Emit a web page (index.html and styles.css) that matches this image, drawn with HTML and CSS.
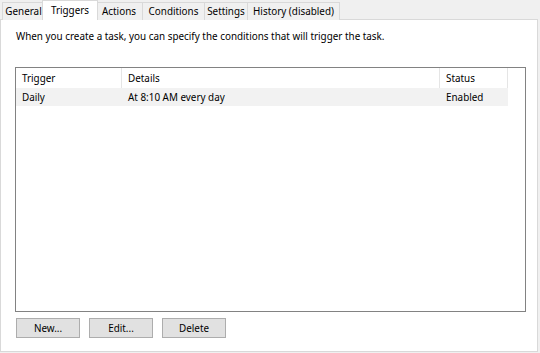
FILE: index.html
```html
<!DOCTYPE html>
<html>
<head>
<meta charset="utf-8">
<link rel="stylesheet" href="styles.css">
</head>
<body>
<div class="dialog">
  <div class="tabs">
    <div class="tab t-general">General</div>
    <div class="tab t-triggers selected">Triggers</div>
    <div class="tab t-actions">Actions</div>
    <div class="tab t-conditions">Conditions</div>
    <div class="tab t-settings">Settings</div>
    <div class="tab t-history">History (disabled)</div>
  </div>
  <div class="page">
    <p class="intro">When you create a task, you can specify the conditions that will trigger the task.</p>
    <div class="listbox">
      <div class="row header">
        <div class="cell c1">Trigger</div>
        <div class="cell c2">Details</div>
        <div class="cell c3">Status</div>
      </div>
      <div class="row item">
        <div class="cell c1">Daily</div>
        <div class="cell c2">At 8:10 AM every day</div>
        <div class="cell c3">Enabled</div>
      </div>
    </div>
    <div class="buttons">
      <button class="btn">New...</button>
      <button class="btn">Edit...</button>
      <button class="btn">Delete</button>
    </div>
  </div>
</div>
</body>
</html>
```
FILE: styles.css
```css
html, body {
  margin: 0;
  padding: 0;
  background: #f0f0f0;
  font-family: "Segoe UI", "Noto Sans", "Open Sans", sans-serif;
  font-size: 9.9px;
  color: #000;
}
.dialog {
  width: 538px;
  height: 353px;
  display: flex;
  flex-direction: column;
}
.tabs {
  display: flex;
  align-items: flex-end;
  height: 20px;
  padding-left: 2px;
  position: relative;
  z-index: 1;
  margin-bottom: -1px;
}
.tab {
  box-sizing: border-box;
  height: 18px;
  line-height: 17px;
  border: 1px solid #d9d9d9;
  border-bottom: none;
  margin-left: -1px;
  background: #f0f0f0;
  white-space: nowrap;
  text-align: center;
}
.t-general { width: 43px; margin-left: 0; }
.t-triggers { width: 56px; }
.t-actions { width: 48px; }
.t-conditions { width: 63px; }
.t-settings { width: 44px; }
.t-history { width: 93px; }
.tab.selected {
  background: #fff;
  height: 20px;
  line-height: 18px;
  margin-left: -3px;
  margin-right: -2px;
  position: relative;
  z-index: 2;
}
.page {
  height: 331px;
  background: #fff;
  border: 1px solid #d9d9d9;
  display: flex;
  flex-direction: column;
  padding: 0 11px 0 14px;
}
.intro {
  margin: 8px 0 0 1px;
  line-height: 16px;
  white-space: nowrap;
}
.listbox {
  margin-top: 23px;
  height: 243px;
  width: 509px;
  border: 1px solid #828282;
  background: #fff;
}
.row {
  display: flex;
  height: 20px;
  line-height: 20px;
}
.row.item {
  height: 18px;
  line-height: 18px;
  width: 492px;
  background: #f2f2f2;
}
.cell {
  padding-left: 6px;
  white-space: nowrap;
  box-sizing: border-box;
}
.c1 { width: 106px; }
.c2 { width: 318px; }
.c3 { width: 68px; }
.header .cell { border-right: 1px solid #e5e5e5; }
.buttons {
  display: flex;
  gap: 9px;
  margin-top: 6px;
  padding-left: 1px;
}
.btn {
  width: 64px;
  height: 20px;
  background: #e1e1e1;
  border: 1px solid #adadad;
  font-family: inherit;
  font-size: 9.9px;
  color: #000;
  padding: 0;
  line-height: 16px;
}
```
